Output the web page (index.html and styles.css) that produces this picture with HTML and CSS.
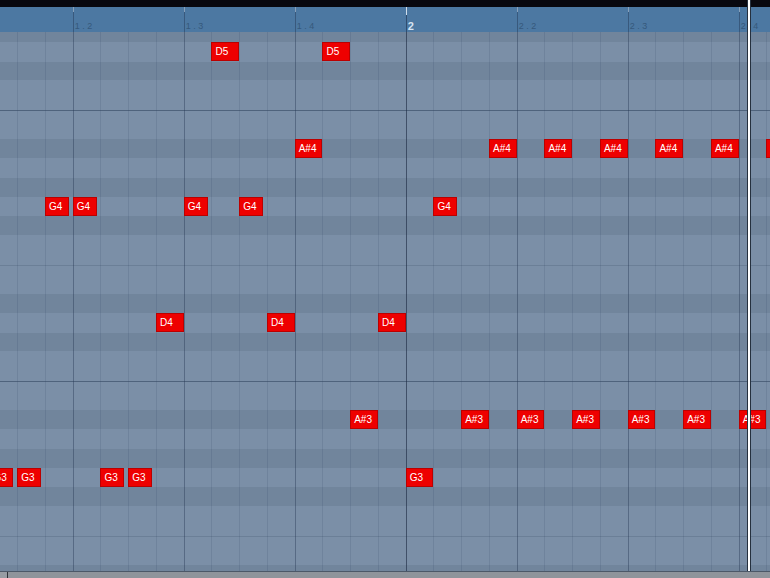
FILE: index.html
```html
<!DOCTYPE html>
<html>
<head>
<meta charset="utf-8">
<link rel="stylesheet" href="styles.css">
</head>
<body>
<div class="app">
  <div class="topbar"></div>
  <div class="ruler">
    <div class="ruler-track">
      <div class="rbeat bar"></div>
      <div class="rbeat"><span class="lbl">1 . 2</span></div>
      <div class="rbeat"><span class="lbl">1 . 3</span></div>
      <div class="rbeat"><span class="lbl">1 . 4</span></div>
      <div class="rbeat bar"><span class="blbl">2</span></div>
      <div class="rbeat"><span class="lbl">2 . 2</span></div>
      <div class="rbeat"><span class="lbl">2 . 3</span></div>
      <div class="rbeat"><span class="lbl">2 . 4</span></div>
    </div>
  </div>
  <div class="grid">
    <div class="vlines">
      <div class="vl"></div><div class="vl"></div><div class="vl"></div><div class="vl"></div>
      <div class="vl"></div><div class="vl"></div><div class="vl"></div><div class="vl"></div>
      <div class="vl"></div><div class="vl"></div><div class="vl"></div><div class="vl"></div>
      <div class="vl"></div><div class="vl"></div><div class="vl"></div><div class="vl"></div>
      <div class="vl"></div><div class="vl"></div><div class="vl"></div><div class="vl"></div>
      <div class="vl"></div><div class="vl"></div><div class="vl"></div><div class="vl"></div>
      <div class="vl"></div><div class="vl"></div><div class="vl"></div><div class="vl"></div>
      <div class="vl"></div><div class="vl"></div><div class="vl"></div><div class="vl"></div>
    </div>
    <div class="lane lb first"></div>
    <div class="lane ln">
      <div class="note w27" style="left:211.45px">D5</div>
      <div class="note w27" style="left:322.45px">D5</div>
    </div>
    <div class="lane lb"></div>
    <div class="lane lw"></div>
    <div class="lane lw oct"></div>
    <div class="lane lb">
      <div class="note w27" style="left:294.7px">A#4</div>
      <div class="note w27" style="left:489px">A#4</div>
      <div class="note w27" style="left:544.45px">A#4</div>
      <div class="note w27" style="left:599.95px">A#4</div>
      <div class="note w27" style="left:655.45px">A#4</div>
      <div class="note w27" style="left:710.95px">A#4</div>
      <div class="note w27" style="left:766.45px">A#4</div>
    </div>
    <div class="lane ln"></div>
    <div class="lane lb"></div>
    <div class="lane ln">
      <div class="note w24" style="left:44.95px">G4</div>
      <div class="note w24" style="left:72.7px">G4</div>
      <div class="note w24" style="left:183.7px">G4</div>
      <div class="note w24" style="left:239.2px">G4</div>
      <div class="note w24" style="left:433.45px">G4</div>
    </div>
    <div class="lane lb"></div>
    <div class="lane lw"></div>
    <div class="lane lw ef"></div>
    <div class="lane lb"></div>
    <div class="lane ln">
      <div class="note w27" style="left:155.95px">D4</div>
      <div class="note w27" style="left:266.95px">D4</div>
      <div class="note w27" style="left:377.95px">D4</div>
    </div>
    <div class="lane lb"></div>
    <div class="lane lw"></div>
    <div class="lane lw oct"></div>
    <div class="lane lb">
      <div class="note w27" style="left:350.2px">A#3</div>
      <div class="note w27" style="left:461.2px">A#3</div>
      <div class="note w27" style="left:516.7px">A#3</div>
      <div class="note w27" style="left:572.2px">A#3</div>
      <div class="note w27" style="left:627.7px">A#3</div>
      <div class="note w27" style="left:683.2px">A#3</div>
      <div class="note w27" style="left:738.7px">A#3</div>
    </div>
    <div class="lane ln"></div>
    <div class="lane lb"></div>
    <div class="lane ln">
      <div class="note w24" style="left:-10.55px">G3</div>
      <div class="note w24" style="left:17.2px">G3</div>
      <div class="note w24" style="left:100.45px">G3</div>
      <div class="note w24" style="left:128.2px">G3</div>
      <div class="note w27" style="left:405.7px">G3</div>
    </div>
    <div class="lane lb"></div>
    <div class="lane lw"></div>
    <div class="lane lw ef"></div>
    <div class="lane lb"></div>
  </div>
  <div class="hscroll"><div class="thumb"></div></div>
  <div class="playhead"></div>
</div>
</body>
</html>
```

FILE: styles.css
```css
html, body {
  margin: 0;
  padding: 0;
}
body {
  background: #7b8fa7;
  font-family: "Liberation Sans", Arial, sans-serif;
}
.app {
  width: 770px;
  height: 578px;
  position: relative;
  overflow: hidden;
  display: flex;
  flex-direction: column;
}
.topbar {
  flex: none;
  height: 7px;
  background: #08080f;
}
.ruler {
  flex: none;
  height: 25px;
  background: #4c78a2;
  display: flex;
  overflow: hidden;
}
.ruler-track {
  display: flex;
  margin-left: -38.3px;
}
.rbeat {
  flex: none;
  width: 111px;
  height: 25px;
  box-sizing: border-box;
  border-left: 1px solid rgba(40, 64, 94, 0.55);
  position: relative;
}
.rbeat::before {
  content: "";
  position: absolute;
  left: -1px;
  top: 0;
  width: 1px;
  height: 5px;
  background: rgba(200, 218, 236, 0.55);
}
.rbeat.bar {
  border-left-color: rgba(30, 50, 78, 0.6);
}
.rbeat.bar::before {
  height: 8px;
  background: #cfdeec;
}
.lbl {
  display: block;
  padding: 14px 0 0 1px;
  font-size: 9px;
  line-height: 10px;
  color: #36597c;
  white-space: pre;
}
.blbl {
  display: block;
  padding: 13px 0 0 1px;
  font-size: 11px;
  font-weight: bold;
  line-height: 12px;
  color: #d6e4f2;
}
.grid {
  flex: none;
  height: 539px;
  position: relative;
  overflow: hidden;
}
.vlines {
  position: absolute;
  top: 0;
  bottom: 0;
  left: -38.3px;
  display: flex;
  z-index: 1;
  pointer-events: none;
}
.vl {
  flex: none;
  width: 27.75px;
  box-sizing: border-box;
  border-left: 1px solid rgba(48, 68, 98, 0.16);
}
.vl:nth-child(4n+1) {
  border-left-color: rgba(38, 56, 84, 0.42);
}
.vl:nth-child(16n+1) {
  border-left-color: rgba(28, 42, 66, 0.62);
}
.lane {
  position: relative;
  box-sizing: border-box;
  flex: none;
}
.lb {
  height: 18.8px;
  background: #71859c;
}
.ln {
  height: 19.9px;
  background: #7b8fa7;
}
.lw {
  height: 29.35px;
  background: #7b8fa7;
}
.first {
  height: 9.7px;
}
.oct {
  border-top: 1px solid #4f637c;
}
.ef {
  border-top: 1px solid #6b7f97;
}
.note {
  position: absolute;
  top: 0;
  height: 19px;
  z-index: 2;
  box-sizing: border-box;
  background: #ee0000;
  border: 1px solid #bb0000;
  color: #ffffff;
  font-size: 10px;
  line-height: 17px;
  padding-left: 3px;
  white-space: nowrap;
  overflow: hidden;
}
.w27 {
  width: 27.75px;
}
.w24 {
  width: 24px;
}
.hscroll {
  flex: none;
  height: 7px;
  box-sizing: border-box;
  background: #8f949b;
  border-top: 1px solid #4c5868;
  display: flex;
}
.thumb {
  width: 8px;
  box-sizing: border-box;
  background: #979ca3;
  border-right: 1px solid #2e3238;
}
.playhead {
  position: absolute;
  left: 747px;
  top: 0;
  width: 4px;
  height: 571px;
  box-sizing: border-box;
  background: #ffffff;
  border-left: 1px solid #25303e;
  border-right: 1px solid #25303e;
  z-index: 5;
}
```
